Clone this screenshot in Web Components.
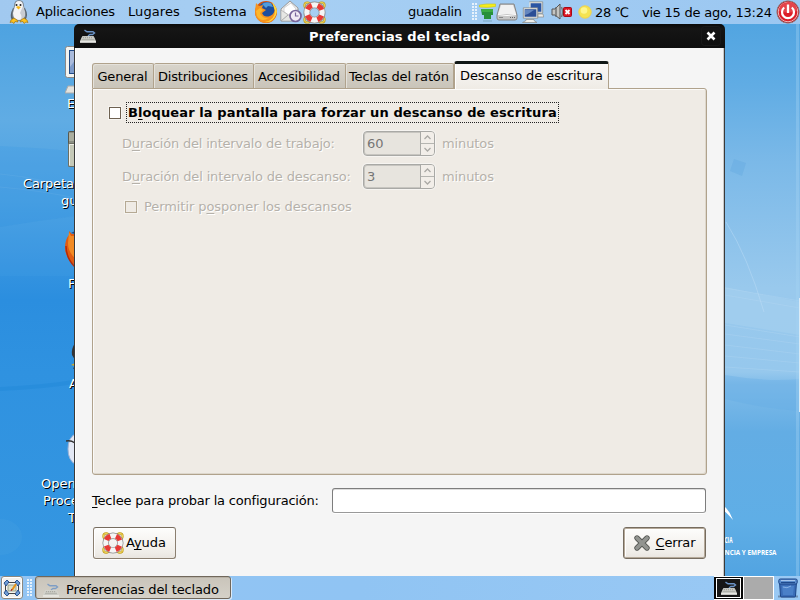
<!DOCTYPE html>
<html lang="es"><head><meta charset="utf-8"><title>Preferencias del teclado</title>
<style>html,body{margin:0;width:800px;height:600px;overflow:hidden;font:13px/16px "DejaVu Sans",sans-serif;color:#000}</style></head>
<body><gnome-desktop></gnome-desktop>
<script>
const ICONS = {
 penguin:[24,24,`<path d="M6 8q-4 8-1 12h13q4-4 0-12z" fill="#56616d"/><path d="M7 6Q7 0 12 0t5 6l2 8q0 7-7 7t-7-7z" fill="#7b8791"/><path d="M8 6q0-5 4-5t4 5l2 7q0 7-6 7t-6-7z" fill="#f4f4f6"/><path d="M13 13q3 4 0 7q5-1 5-7l-2-7z" fill="#c9ccd2"/><circle cx="9.5" cy="5" r="1" fill="#222"/><circle cx="13.500" cy="5" r="1" fill="#222"/><path d="M9 7l2-1 3 1-2.500 2.500z" fill="#f5b81c"/><path d="M4 20l3-2 3 2 1 2-3-.5-1 2-2-1.500-2 .5zM20 20l-3-2-3 2-1 2 3-.5 1 2 2-1.500 2 .5z" fill="#ffc21f" stroke="#9a6a00" stroke-width=".6"/>`],
 firefox:[24,24,`<circle cx="12" cy="12" r="11" fill="#d9520c"/><circle cx="12.500" cy="10.500" r="8.500" fill="#1d4f9e"/><path d="M8 4q4-3 9-1l2 4-5-1-2 2z" fill="#4f9cdd"/><path d="M2 3l3 3 4-1-1 3 4 2-4 3q2 5 8 3 5-2 5-9l1 4q1 11-10 12Q1 22 1 11z" fill="#f7931e"/><path d="M2 11l4-3 3 2-3 3q2 6 9 5-8 5-12-2z" fill="#fcb72c"/><path d="M18 2q7 7 4 13-4 8-11 7 10-2 10-11z" fill="#ffd83c"/>`],
 mail:[24,24,`<path d="M2 9L11 1l8 7v13H2z" fill="#eee" stroke="#999"/><path d="M5 8l7-5 5 6v4l-6 3-6-4z" fill="#fff" stroke="#bbb" stroke-width=".6"/><path d="M2 10l9 6 8-7v12H2z" fill="#e6e7e4" stroke="#aaa" stroke-width=".7"/><path d="M2 21l7-6M19 21l-6-6" stroke="#aaa"/><circle cx="16.500" cy="16" r="5.500" fill="#f1eaf5" stroke="#78659b" stroke-width="1.700"/><path d="M16.500 12.500V16H19.500" stroke="#78659b" stroke-width="1.200" fill="none"/>`],
 lifebuoy:[24,24,`<g fill="none" stroke="#c29a16" stroke-width="2.200"><circle cx="4.500" cy="4.500" r="3"/><circle cx="19.500" cy="4.500" r="3"/><circle cx="4.500" cy="19.500" r="3"/><circle cx="19.500" cy="19.500" r="3"/></g><g fill="none" stroke="#f9e46a" stroke-width=".9"><circle cx="4.500" cy="4.500" r="3"/><circle cx="19.500" cy="4.500" r="3"/><circle cx="4.500" cy="19.500" r="3"/><circle cx="19.500" cy="19.500" r="3"/></g><circle cx="12" cy="12" r="8" fill="none" stroke="#8e8e8e" stroke-width="7"/><circle cx="12" cy="12" r="8" fill="none" stroke="#f5f5f5" stroke-width="5.400"/><circle cx="12" cy="12" r="8" fill="none" stroke="#e83a35" stroke-width="5.400" stroke-dasharray="6.283" stroke-dashoffset="9.425"/>`],
 keyboard:[16,14,`<path d="M8.500 8V6.500L10 5.500h2.500L14.500 4 13 2.800H7L4.500 1.200" fill="none" stroke="#6b93c6" stroke-width="1.400"/><path d="M2.500 7.500h11l2.200 5H.3z" fill="#c9cac4" stroke="#d8d9d3" stroke-width=".8"/><path d="M3 8.700h10M2.500 10.500h11" stroke="#8b8d87" stroke-width=".8" stroke-dasharray="1 1"/><path d="M0 13h16" stroke="#f0f0ec" stroke-width="1.600"/>`],
 funnel:[17,19,`<path d="M.5 2Q7 .5 16.500 1V3.500Q8 5 .5 4z" fill="#f6ed1b" stroke="#cbc616" stroke-width=".6"/><path d="M2 6h12v6h-2v4H5v-4H3z" fill="#27903a"/><path d="M2 6h12v3H3z" fill="#3bac43"/><path d="M4 18h9" stroke="#7ca9c2"/>`],
 drive:[22,18,`<path d="M4 1h14l3 11v3q0 2-2 2H3q-2 0-2-2v-3z" fill="#c6c6c6" stroke="#858585"/><path d="M5 2h12l3 9H2z" fill="#f1f1f1"/><path d="M2 11.500q9 2 18 0" fill="none" stroke="#fff"/><path d="M3 14.500h4" stroke="#888"/><path d="M14 14.500h5" stroke="#666" stroke-dasharray="1 1"/>`],
 network:[22,22,`<g stroke="#e4e5df" stroke-width="1.300"><path d="M8 1.500h12v10H8z" fill="#2b55a3"/><path d="M2 7.500h13v9H2z" fill="#2b4e96"/></g><path d="M7.300 .8h13.400v11.400h-5M1.300 6.800h14.400v10.400H1.300z" fill="none" stroke="#777" stroke-width=".6"/><path d="M3 9h9l-6 4-3 1z" fill="#6486bf"/><path d="M16 13h5l.7 3H16zM4 18.500h8v1l3 2H.5l3.500-2z" fill="#efefeb" stroke="#8a8a86" stroke-width=".7"/>`],
 mute:[21,18,`<path d="M1 6h3l5-5v15l-5-4H1z" fill="#c4c5c2" stroke="#555" stroke-width="1"/><path d="M5 4v10" stroke="#666" stroke-width="1.300"/><path d="M10.500 4q2 5 0 10" stroke="#777" fill="none" stroke-width="1.400"/><rect x="12.500" y="4.500" width="8" height="9" rx="1" fill="#dc1725" stroke="#a90714"/><path d="M14.500 7l4 4M18.500 7l-4 4" stroke="#fff" stroke-width="1.800"/>`],
 sun:[14,14,`<circle cx="7" cy="7" r="6.200" fill="#f5e351" stroke="#f0d24a"/><circle cx="6" cy="5.500" r="3.300" fill="#fdf58d"/>`],
 power:[24,24,`<circle cx="12" cy="12" r="11.200" fill="#b5101a" stroke="#8c8c8c" stroke-width=".8"/><circle cx="12" cy="12" r="9.800" fill="#dc1f28" stroke="#efb7b9" stroke-width="1"/><path d="M3 11q0-8 9-9t9 9q-9 3-18 0" fill="#e4434a"/><path d="M8.200 7.500a6 6 0 1 0 7.600 0" fill="none" stroke="#fff" stroke-width="2.200"/><path d="M12 4.500v8.500" stroke="#fff" stroke-width="2.300"/>`],
 close:[10,10,`<path d="M1.500 1.500l7 7M8.500 1.500l-7 7" stroke="#fff" stroke-width="2.600"/>`],
 cross:[18,18,`<path d="M4 4l10 10M14 4L4 14" stroke="#555753" stroke-width="5.400" stroke-linecap="round"/><path d="M4 4l10 10M14 4L4 14" stroke="#929490" stroke-width="3.800" stroke-linecap="round"/>`],
 desk:[18,18,`<rect x="2.500" y="3.500" width="13" height="11" fill="#f6f6f1" stroke="#444"/><path d="M5 6h8v6H5z" fill="#dcdfc8" stroke="#87917c" stroke-width=".8"/><path d="M1 4l3-3 2 2-3 4zM17 4l-3-3-2 2 3 4zM1 14l3 3 2-2-3-4zM17 14l-3 3-2-2 3-4z" fill="#6f9cd5" stroke="#204a87" stroke-width=".9"/><path d="M9 11l4-6" stroke="#e89216" stroke-width="2"/><path d="M8 12l1-2" stroke="#a12" stroke-width="1"/>`],
 trash:[20,20,`<path d="M0 18.500h20" stroke="#566b86" stroke-width="2" opacity=".6"/><path d="M1.500 4h17l-1 14q0 1-1 1h-13q-1 0-1-1z" fill="#3a6cb6" stroke="#1c4587"/><path d="M4 8h12l-1 9H5z" fill="#4a80c8"/><rect x=".8" y="1" width="18.400" height="5" rx="1.500" fill="#5b8dcd" stroke="#1c4587"/><path d="M3 4.500h14" stroke="#1f4a8d"/><path d="M3 2.500h14" stroke="#a3c4ec"/><path d="M5 9q4 2 8-1" stroke="#85b0e5" fill="none"/>`],
 computer:[10,48,`<rect x=".5" y=".5" width="26" height="31" rx="2" fill="#f3f3f0" stroke="#888"/><rect x="4.500" y="4.500" width="18" height="23" fill="#7d9bcb" stroke="#204a87"/><path d="M5 5h6v8l-6 8z" fill="#aabbdc"/><path d="M3 40h9v7H0z" fill="#e3e3df" stroke="#aaa"/>`],
 folder:[7,37,`<rect x=".5" y=".5" width="20" height="35" rx="1" fill="#8c9084" stroke="#56584f"/><path d="M1 2h10v8H1z" fill="#abae9f"/><rect x=".5" y="12.500" width="20" height="23" rx="1" fill="#c5c9b8" stroke="#6c6f64"/><path d="M1.500 34V13.500H9" fill="none" stroke="#eff0e8"/>`],
 fox:[10,38,`<path d="M4 0l3 3h6v34Q0 27 0 17 0 8 4 4z" fill="#e25c12"/><path d="M4 1l2 4h6v24Q3 22 3 12z" fill="#f28a24"/><path d="M6 2l4-2v3z" fill="#204a87"/><path d="M1 15q0 12 9 21" fill="none" stroke="#b72b08" stroke-width="1.500"/>`],
 bird:[4,29,`<path d="M4 0Q0 6 1 12l3 5z" fill="#343436"/><path d="M4 6q-2 4 0 8z" fill="#888"/><path d="M0 22l4-2v3z" fill="#d8ad20"/><path d="M2 25l2-1v3z" fill="#282828"/>`],
 office:[9,33,`<path d="M9 1Q2 5 2 16t7 15z" fill="#e3e8f4" stroke="#9cb2d6"/><path d="M0 8q5-1 9 2" stroke="#333" stroke-width="1.400" fill="none"/>`]
};
function define(tag, css, html, setup){
  const t=document.createElement('template');
  t.innerHTML=`<style>*{box-sizing:border-box}:host{display:block;box-sizing:border-box}${css}</style>${html}`;
  customElements.define(tag,class extends HTMLElement{
    constructor(){super();this.attachShadow({mode:'open'}).append(t.content.cloneNode(true));}
    connectedCallback(){if(setup)setup(this,this.shadowRoot);}
  });
}
define('gnome-desktop',`:host{position:relative;width:800px;height:600px;overflow:hidden;display:flex;flex-direction:column;justify-content:space-between}
 desk-wallpaper{position:absolute;inset:0}desk-item{position:absolute}top-panel,bottom-panel{position:relative}pref-window{position:absolute;left:74px;top:24px}`,
`<desk-wallpaper></desk-wallpaper>
<desk-item style="left:65px;top:46px"><g-icon name="computer"></g-icon></desk-item>
<desk-item style="left:67px;top:96px"><g-text>E</g-text></desk-item>
<desk-item style="left:68px;top:131px"><g-icon name="folder"></g-icon></desk-item>
<desk-item style="left:23px;top:176px"><g-text w="51">Carpeta</g-text></desk-item>
<desk-item style="left:61px;top:193px"><g-text>gu</g-text></desk-item>
<desk-item style="left:65px;top:231px"><g-icon name="fox"></g-icon></desk-item>
<desk-item style="left:68px;top:276px"><g-text>F</g-text></desk-item>
<desk-item style="left:71px;top:343px"><g-icon name="bird"></g-icon></desk-item>
<desk-item style="left:69px;top:376px"><g-text>A</g-text></desk-item>
<desk-item style="left:66px;top:433px"><g-icon name="office"></g-icon></desk-item>
<desk-item style="left:41px;top:476px"><g-text>Open</g-text></desk-item>
<desk-item style="left:43px;top:493px"><g-text>Proce</g-text></desk-item>
<desk-item style="left:68px;top:510px"><g-text>T</g-text></desk-item>
<top-panel></top-panel><pref-window></pref-window><bottom-panel></bottom-panel>`);
define('desk-wallpaper','svg{display:block}text{font-family:"Open Sans","Noto Sans",sans-serif;font-weight:700;fill:#fff}',`<svg width="800" height="600"><defs>
<linearGradient id="l" x2="0" y2="1"><stop offset="0" stop-color="#4b9fe0"/><stop offset=".06" stop-color="#50a4e1"/><stop offset=".2" stop-color="#60ace4"/><stop offset=".34" stop-color="#489fe2"/><stop offset=".5" stop-color="#2b8edf"/><stop offset=".62" stop-color="#2f92e0"/><stop offset="1" stop-color="#3697e1"/></linearGradient>
<linearGradient id="r" x2="0" y2="1"><stop offset=".04" stop-color="#52a5e1"/><stop offset=".14" stop-color="#60ace4"/><stop offset=".27" stop-color="#7bb9e8"/><stop offset=".48" stop-color="#99c9ed"/><stop offset=".62" stop-color="#96c8ed"/><stop offset=".64" stop-color="#80bce9"/><stop offset=".72" stop-color="#63ade4"/><stop offset=".87" stop-color="#5faee6"/><stop offset="1" stop-color="#4c9fdf"/></linearGradient></defs>
<rect width="400" height="600" fill="url(#l)"/><rect x="400" width="400" height="600" fill="url(#r)"/>
<path d="M0 146q45 2 80 6v63Q35 221 0 227z" fill="#3697e2" opacity=".22"/><path d="M0 174q45 4 80 18M0 187q45 4 80 12" stroke="#6eb3e8" fill="none" opacity=".25"/><path d="M0 227q40-7 80-11v60H0z" fill="#62b0e9" opacity=".1"/><path d="M0 389q45-2 80-8" stroke="#1d86d8" stroke-width="4" fill="none" opacity=".4"/><ellipse cx="0" cy="537" rx="22" ry="18" fill="#66b1ea" opacity=".12"/>
<path d="M725 287l75 15v33l-75-12z" fill="#b7daf4" opacity=".25"/><g fill="none" stroke="#bcdcf3" opacity=".28"><path d="M725 288l75 13M725 295l75 13M725 325l75 12M725 334l75 10M725 345l75 9M725 356l75 7M725 367l75 5"/></g><path d="M725 375q40 7 75 4v32q-35-2-75-12z" fill="#65ade5" opacity=".35"/><path d="M726 222q22 35 38 90" fill="none" stroke="#c5e2f7" opacity=".4"/><path d="M734 159l12 4-4 13-12-5z" fill="#539fdc" opacity=".25"/><path d="M796 24h3v552h-3z" fill="#a7d4f4" opacity=".35"/><path d="M799.500 298v114" stroke="#d9eaf6"/>
<path d="M724 506q6 5 9 14-6-7-9-9z" fill="#fff"/><text x="724.500" y="543" font-size="8.500" textLength="8" lengthAdjust="spacingAndGlyphs">CIA</text><text x="724.500" y="554.500" font-size="7.500" textLength="52" lengthAdjust="spacingAndGlyphs">NCIA Y EMPRESA</text></svg>`);
define('desk-item',':host{color:#fff;text-shadow:1px 1px 0 #000}','<slot></slot>');
define('top-panel',`:host{height:24px;display:flex;justify-content:space-between;align-items:center;background:linear-gradient(90deg,#a1c9f0,#a7cff3 35%,#9bc7f1)}div{display:flex;align-items:center;height:24px}g-text{height:24px;line-height:24px}.a{padding-left:7px}`,
`<div class="a"><g-icon name="penguin"></g-icon><g-text w="79" style="margin-left:5px">Aplicaciones</g-text><g-text w="52" style="margin-left:13px">Lugares</g-text><g-text w="53" style="margin-left:14px">Sistema</g-text><g-icon name="firefox" style="margin-left:7px"></g-icon><g-icon name="mail" style="margin-left:1px"></g-icon><g-icon name="lifebuoy" style="width:23px;height:23px"></g-icon></div>
<div><g-text w="54">guadalin</g-text><panel-grip style="margin:0 1px 0 10px"></panel-grip><g-icon name="funnel"></g-icon><g-icon name="drive"></g-icon><g-icon name="network" style="margin-left:4px"></g-icon><g-icon name="mute" style="margin-left:7px"></g-icon><g-icon name="sun" style="margin-left:6px"></g-icon><g-text w="34" style="margin-left:3px;padding-top:1px">28 ℃</g-text><g-text w="130" style="margin-left:13px;padding-top:1px">vie 15 de ago, 13:24</g-text><g-icon name="power" style="margin-left:4px"></g-icon></div>`);
define('panel-grip',':host{width:6px;height:18px;background:radial-gradient(circle at 1px 1px,#e7f2fc 1px,transparent 1.200px) 0 0/3px 3px}','');
define('pref-window',`:host{width:651px;height:552px;display:flex;flex-direction:column}.body{flex:1;background:#f5f5f5;border-left:1px solid #3a3a3a;border-right:1px solid #3a3a3a;box-shadow:inset -1px 0 #c8c8c8,inset 1px 0 #fff;padding:13px 17px 0;display:flex;flex-direction:column}.test{display:flex;align-items:center;justify-content:space-between;height:25px;margin:13px 1px 0 0}.entry{width:374px;height:25px;border:1px solid #7d7d7d;border-bottom-color:#999;border-radius:3px;background:#fff;box-shadow:0 1px #fff,inset 0 1px #ddd}.buttons{display:flex;justify-content:space-between;margin:14px 1px 0 1px}`,
`<title-bar></title-bar><div class="body"><tab-book></tab-book><div class="test"><g-text w="227"><u>T</u>eclee para probar la configuración:</g-text><div class="entry"></div></div><div class="buttons"><push-button><g-icon name="lifebuoy" style="width:22px;height:22px"></g-icon><g-text w="40">A<u>y</u>uda</g-text></push-button><push-button class="default"><g-icon name="cross"></g-icon><g-text w="40" style="margin-left:3px"><u>C</u>errar</g-text></push-button></div></div>`);
define('title-bar',`:host{height:24px;background:linear-gradient(#0a0a0a,#151515 20%,#0e0e0e);border-radius:5px 5px 0 0;color:#fff;font-weight:bold;display:grid;grid-template-columns:24px 1fr 24px;align-items:center}.t{justify-self:center;padding-top:2px}.i{margin-left:6px}.c{width:18px;height:18px;border-radius:3px;box-shadow:0 0 0 1px #191919;display:grid;place-items:center;margin-left:1px}`,
`<g-icon class="i" name="keyboard"></g-icon><g-text class="t" w="181">Preferencias del teclado</g-text><div class="c"><g-icon name="close"></g-icon></div>`);
define('tab-book',`.tabs{display:flex;align-items:flex-end;height:27px}.page{height:387px;border:1px solid #b0a28c;border-radius:0 3px 3px 3px;background:#efebe5;box-shadow:inset 1px 1px #fbfaf8,inset -1px -1px #ddd7cc;width:615px;padding:13px 15px 0 16px;display:flex;flex-direction:column}
 .row{display:flex;align-items:center}.focus{border:1px dotted #222;height:21px;width:433px;padding:2px 1px 0;font-weight:bold;margin-left:5px}.dis{color:#b5b1aa;text-shadow:1px 1px #fff;height:25px;margin-left:13px}.dis .lab{width:241px}.dis .min{margin-left:7px}`,
`<div class="tabs"><book-tab style="width:62px"><g-text w="50">General</g-text></book-tab><book-tab style="width:100px"><g-text w="90">Distribuciones</g-text></book-tab><book-tab style="width:92px"><g-text w="82">Accesibilidad</g-text></book-tab><book-tab style="width:108px"><g-text w="100">Teclas del ratón</g-text></book-tab><book-tab class="on" style="width:155px"><g-text w="143">Descanso de escritura</g-text></book-tab></div>
<div class="page"><div class="row"><check-box></check-box><div class="focus"><g-text w="429">B<u>l</u>oquear la pantalla para forzar un descanso de escritura</g-text></div></div>
<div class="row dis" style="margin-top:8px"><div class="lab"><g-text w="213">D<u>u</u>ración del intervalo de trabajo:</g-text></div><spin-box>60</spin-box><g-text class="min" w="52">minutos</g-text></div>
<div class="row dis" style="margin-top:8px"><div class="lab"><g-text w="229">D<u>u</u>ración del intervalo de descanso:</g-text></div><spin-box>3</spin-box><g-text class="min" w="52">minutos</g-text></div>
<div class="row dis" style="margin:5px 0 0 16px"><check-box class="off"></check-box><g-text w="208" style="margin-left:7px">Permitir p<u>o</u>sponer los descansos</g-text></div></div>`);
define('book-tab',`:host{height:25px;border:1px solid #b0a28c;border-bottom:0;border-left-width:0;background:linear-gradient(#d8d4cb,#c9c4b9);box-shadow:inset 1px 1px #e4e1da;display:flex;align-items:center;justify-content:center;padding:2px 1px 0 0;border-radius:2px 2px 0 0}:host(:first-child){border-left-width:1px;border-radius:3px 2px 0 0}:host(.on){height:28px;margin-bottom:-1px;border-left-width:1px;background:linear-gradient(#f9f8f7,#efebe5);border-top:3px solid #101716;position:relative;padding:0 0 1px;border-radius:3px 3px 0 0;box-shadow:inset 1px 0 #fff}`,'<slot></slot>');
define('check-box',':host{width:12px;height:12px;border:1px solid #6e6151;background:#fff;box-shadow:0 0 0 1px #f6f4f0}:host(.off){border-color:#b5a994;background:#efebe5}','');
define('spin-box',`:host{width:72px;height:25px;border:1px solid #a9a9a6;border-radius:4px;display:flex;background:#e7e4de;color:#757575;text-shadow:none;box-shadow:0 0 0 1px #f6f4f1,inset 0 0 0 1px #c7c5c0}.v{flex:1;padding:4px 3px}.s{width:14px;border-left:1px solid #a9a9a6;background:#f2eee9;border-radius:0 3px 3px 0}svg{display:block}`,
`<div class="v"><slot></slot></div><div class="s"><svg width="13" height="23"><path d="M0 11.500h13" stroke="#b5b5b1"/><path d="M3.500 7l3-3 3 3M3.500 16l3 3 3-3" fill="none" stroke="#aaa9a5" stroke-width="1.300"/></svg></div>`);
define('push-button',`:host{width:83px;height:32px;border:1px solid #8b7f70;border-top-color:#766c5f;border-radius:3px;background:linear-gradient(#fdfdfc,#f0ede8 80%,#e9e5df);box-shadow:0 1px #fff,inset 1px 1px #fff;display:flex;align-items:center;justify-content:center;gap:2px;padding-right:1px}:host(.default){box-shadow:inset 0 0 0 1px #b5a999,inset 2px 2px #fff;border-color:#766c5f}`,'<slot></slot>');
define('bottom-panel',`:host{height:24px;background:linear-gradient(90deg,#92c4f3,#90c4f3 45%,#9ac9f4);display:flex;align-items:stretch;padding:0 2px 0 1px}.d{width:22px;height:23px;border:1px solid #8d887f;border-radius:3px;background:#f3f1ee;display:grid;place-items:center;box-shadow:inset 0 0 0 1px #fff}.task{width:196px;height:23px;border:1px solid #70675b;border-radius:3px;background:linear-gradient(#c9c4ba,#d5d1c8);box-shadow:inset 1px 1px #b8b1a5,1px 1px #dbeaf8;display:flex;align-items:center;padding:4px 0 0 7px;margin-left:2px}.task g-icon{opacity:.8}.sp{flex:1}.ws{display:flex;border:1px solid #fff;border-left-width:0;width:60px;background:#fff;gap:1px}.w1{width:29px;background:#050505;padding:1px 2px}.w1 div{border:1px solid #fff;background:#171717;height:100%;display:grid;place-items:center}.w2{flex:1;background:#ababab}`,
`<div class="d"><g-icon name="desk"></g-icon></div><panel-grip style="margin:3px 0 0 4px"></panel-grip><div class="task"><g-icon name="keyboard"></g-icon><g-text w="153" style="margin-left:7px">Preferencias del teclado</g-text></div><div class="sp"></div><div class="ws"><div class="w1"><div><g-icon name="keyboard"></g-icon></div></div><div class="w2"></div></div><g-icon name="trash" style="margin:2px 0 0 4px"></g-icon>`);
define('g-icon',':host{flex:none}svg{display:block;width:100%;height:100%;overflow:hidden}','<svg></svg>',(el,r)=>{
  const [w,h,p]=ICONS[el.getAttribute('name')];const s=r.querySelector('svg');
  if(!el.style.width){el.style.width=w+'px';el.style.height=h+'px'}
  s.setAttribute('viewBox',`0 0 ${w} ${h}`);s.innerHTML=p;
});
// Labels with a "w" attribute are tracked so that they fill that width.
define('g-text',':host{white-space:nowrap;flex:none}span{display:inline-block}::slotted(u){text-underline-offset:2px;text-decoration-thickness:1px;text-decoration-skip-ink:none}','<span><slot></slot></span>',(el,r)=>{
  const w=+el.getAttribute('w');if(!w)return;
  const s=r.querySelector('span');
  s.style.letterSpacing=((w-.2-s.getBoundingClientRect().width)/el.textContent.length)+'px';
  el.style.width=w+'px';
});
</script></body></html>
